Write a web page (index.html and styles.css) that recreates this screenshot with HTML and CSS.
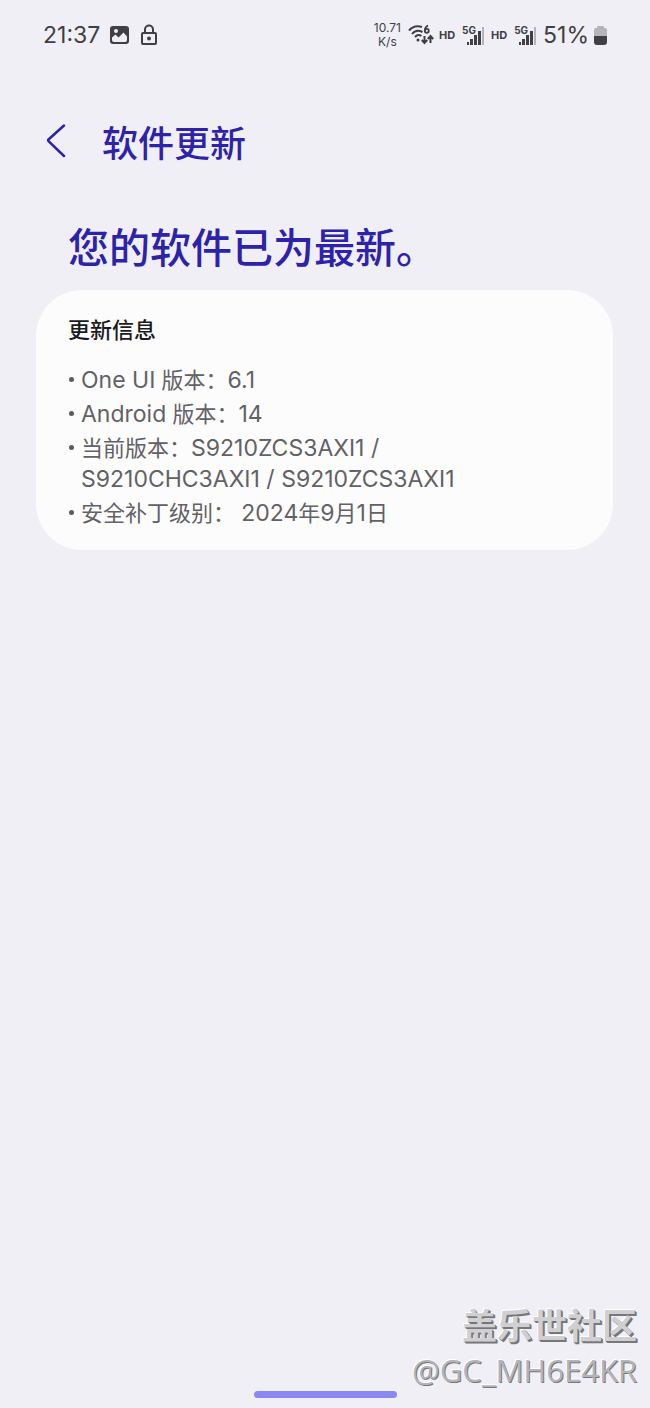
FILE: index.html
```html
<!DOCTYPE html>
<html lang="zh-CN">
<head>
  <meta charset="UTF-8" />
  <meta name="viewport" content="width=device-width, initial-scale=1.0"/>
  <title>软件更新</title>
  <link rel="stylesheet" href="styles.css">
</head>
<body>
  <div class="status-bar">
    <div class="status-left">
      <span class="clock">21:37</span>
      <svg class="icon-photo" width="20" height="20" viewBox="0 0 20 20">
        <rect x="0" y="1" width="19" height="18" rx="3" fill="#3f3f44"/>
        <circle cx="6" cy="6" r="2" fill="#f0eff5"/>
        <path d="M2 12.500l3.500-3 3 3 5-5 3.500 4v3.500q0 2-2 2H4q-2 0-2-2z" fill="#f0eff5"/>
      </svg>
      <svg class="icon-lock" width="18" height="22" viewBox="0 0 18 22" fill="none" stroke="#3f3f44" stroke-width="2">
        <rect x="2" y="9" width="14" height="11" rx="1"/>
        <path d="M5 9V5.500a4 4 0 0 1 8 0V9"/>
        <circle cx="9" cy="14.500" r="2" fill="#3f3f44" stroke="none"/>
      </svg>
    </div>
    <div class="status-right">
      <div class="speed"><span>10.71</span><span>K/s</span></div>
      <div class="group">
        <svg class="icon-wifi" width="26" height="22" viewBox="0 0 26 22" fill="none" stroke="#3f3f44" stroke-width="2">
          <path d="M1 6.500C4.500 2.500 9.500 1.500 14 3"/>
          <path d="M4 10c2.500-3.200 6.500-4.200 10.500-2"/>
          <path d="M7 13c1.700-2 4-2.500 6.500-1"/>
          <circle cx="10" cy="16" r="1.500" fill="#3f3f44" stroke="none"/>
          <path d="M20 1.500c-2 1-3.200 3-3.200 5" stroke-width="1.800"/>
          <circle cx="18.800" cy="6.800" r="2" stroke-width="1.800"/>
          <path d="M16.500 12v7M13.800 16l2.700 3 2.700-3M22.500 19v-7M19.800 15l2.700-3 2.700 3"/>
        </svg>
        <span class="hd">HD</span>
      </div>
      <div class="signal">
        <span class="net">5G</span>
        <svg width="17" height="18" viewBox="0 0 17 18" fill="#3f3f44">
          <rect x="0" y="15" width="2" height="3"/>
          <rect x="3" y="12" width="3" height="6"/>
          <rect x="7" y="8" width="3" height="10"/>
          <rect x="11" y="4" width="3" height="14"/>
          <rect x="15" y="0" width="2" height="18" fill="#b5b4b9"/>
        </svg>
      </div>
      <span class="hd">HD</span>
      <div class="signal">
        <span class="net">5G</span>
        <svg width="17" height="18" viewBox="0 0 17 18" fill="#3f3f44">
          <rect x="0" y="15" width="2" height="3"/>
          <rect x="3" y="12" width="3" height="6"/>
          <rect x="7" y="8" width="3" height="10"/>
          <rect x="11" y="4" width="3" height="14"/>
          <rect x="15" y="0" width="2" height="18" fill="#b5b4b9"/>
        </svg>
      </div>
      <div class="group">
        <span class="battery-text">51%</span>
        <svg class="icon-battery" width="13" height="19" viewBox="0 0 13 19">
          <path d="M3 2V1q0-1 1-1h5q1 0 1 1v1h1q2 0 2 2v6H0V4q0-2 2-2z" fill="#b5b4b9"/>
          <path d="M0 10h13v6q0 3-3 3H3q-3 0-3-3z" fill="#3f3f44"/>
        </svg>
      </div>
    </div>
  </div>

  <header class="app-bar">
    <button class="back" type="button" aria-label="返回">
      <svg width="20" height="34" viewBox="0 0 20 34" fill="none" stroke="#2d23aa" stroke-width="2.500" stroke-linecap="round" stroke-linejoin="round">
        <path d="M18 1.500L2.500 15.500q-.8.800 0 1.600L18 32"/>
      </svg>
    </button>
    <h1>软件更新</h1>
  </header>

  <main>
    <h2 class="headline">您的软件已为最新。</h2>
    <section class="card">
      <h3>更新信息</h3>
      <ul>
        <li><span class="latin">One UI</span> 版本：<span class="latin">6.1</span></li>
        <li><span class="latin">Android</span> 版本：<span class="latin">14</span></li>
        <li>当前版本：<span class="latin">S9210ZCS3AXI1 /<br>S9210CHC3AXI1 / S9210ZCS3AXI1</span></li>
        <li>安全补丁级别： <span class="latin">2024</span>年<span class="latin">9</span>月<span class="latin">1</span>日</li>
      </ul>
    </section>
  </main>

  <footer>
    <div class="watermark">
      <p class="community">盖乐世社区</p>
      <p class="user">@GC_MH6E4KR</p>
    </div>
    <div class="home-bar"></div>
  </footer>
</body>
</html>
```
FILE: styles.css
```css
* { box-sizing: border-box; }

body {
  margin: 0;
  min-height: 100vh;
  display: flex;
  flex-direction: column;
  background: #f0eff5;
  color: #3f3f44;
  font-family: Inter, "Noto Sans CJK SC", sans-serif;
}

h1, h2, h3, p, ul {
  margin: 0;
  padding: 0;
}

svg {
  display: block;
  flex: none;
}

/* status bar */
.status-bar {
  display: flex;
  justify-content: space-between;
  align-items: center;
  height: 70px;
  padding: 0 43px;
}

.status-left, .status-right, .group {
  display: flex;
  align-items: center;
}

.status-left { gap: 10px; }
.status-right { gap: 7px; }
.group { gap: 5px; }

.clock, .battery-text {
  font-size: 23px;
  line-height: 28px;
}

.speed {
  display: flex;
  flex-direction: column;
  align-items: center;
  font-size: 12px;
  line-height: 14px;
}

.hd {
  font-size: 11px;
  font-weight: 700;
}

.signal {
  display: flex;
  align-items: flex-end;
  height: 20px;
}

.net {
  align-self: flex-start;
  margin-right: -9px;
  font-size: 10px;
  line-height: 10px;
  font-weight: 700;
}

/* title row */
.app-bar {
  display: flex;
  align-items: center;
  gap: 36px;
  height: 142px;
  padding: 0 46px;
}

.back {
  padding: 0;
  border: none;
  background: none;
  cursor: pointer;
}

h1 {
  padding-top: 5px;
  font-size: 36px;
  line-height: 48px;
  font-weight: 500;
  color: #2d23aa;
}

main { padding: 0 37px 0 36px; }

.headline {
  padding: 3px 32px 0;
  margin-bottom: 9px;
  font-size: 41px;
  line-height: 66px;
  font-weight: 500;
  color: #2d23aa;
}

/* version info */
.card {
  padding: 24px 32px 18px;
  border-radius: 46px;
  background: #fcfcfd;
}

h3 {
  margin-bottom: 19px;
  font-size: 22px;
  line-height: 32px;
  font-weight: 500;
  color: #1b1b1d;
}

ul { list-style: none; }

li {
  position: relative;
  margin-bottom: 3px;
  padding-left: 13px;
  font-size: 22px;
  line-height: 31px;
  color: #626265;
}

li::before {
  content: "";
  position: absolute;
  left: 1px;
  top: 12px;
  width: 5px;
  height: 5px;
  border-radius: 50%;
  background: #5c5c5f;
}

.latin { font-size: 23px; }

footer {
  display: flex;
  flex-direction: column;
  margin-top: auto;
  padding-bottom: 10px;
}

.watermark {
  align-self: flex-end;
  padding-right: 13px;
  text-align: right;
}

.community {
  font-size: 35px;
  line-height: 46px;
  font-weight: 700;
  color: #d0d0d3;
  text-shadow: 1px 1px 0 #77777a, 2px 2px 0 #77777a, -1px -1px 0 #fff;
}

.user {
  font-family: "Open Sans", sans-serif;
  font-size: 31px;
  line-height: 42px;
  color: #b4b4b8;
  text-shadow: 1px 1px 0 #77777a, -1px -1px 0 #fff;
}

.home-bar {
  align-self: center;
  width: 22%;
  height: 7px;
  border-radius: 4px;
  background: #8a88f2;
}
```
